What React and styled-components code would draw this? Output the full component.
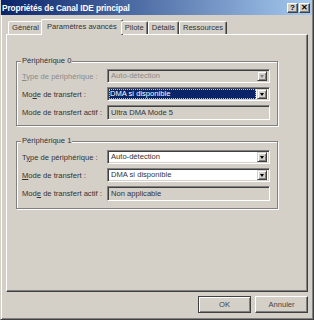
import React from "react"
import styled, { createGlobalStyle } from "styled-components"

const Global = createGlobalStyle`
body {
  margin: 0;
  background: #d4d0c8;
  font-family: "Liberation Sans", Arial, sans-serif;
}
`

const Window = styled.div`
width: 314px;
height: 320px;
box-sizing: border-box;
background: #d4d0c8;
border-left: 1px solid #d4d0c8;
border-right: 1px solid #404040;
border-bottom: 1px solid #404040;
box-shadow: inset 1px 0 0 #fff, inset -1px -1px 0 #808080;
display: flex;
flex-direction: column;
`

const TitleBar = styled.div`
height: 15px;
margin-right: 1px;
display: flex;
align-items: center;
justify-content: space-between;
background: linear-gradient(to right, #0a246a, #a6caf0);
padding: 0 2px 0 1px;
`

const Title = styled.span`
color: #fff;
font-weight: bold;
font-size: 8.3px;
letter-spacing: -0.1px;
white-space: nowrap;
`

const TitleButtons = styled.div`
display: flex;
gap: 1px;
`

const CapButton = styled.div`
width: 11px;
height: 10px;
box-sizing: border-box;
background: #d4d0c8;
border-top: 1px solid #fff;
border-left: 1px solid #fff;
border-right: 1px solid #404040;
border-bottom: 1px solid #404040;
box-shadow: inset -1px -1px 0 #808080;
display: flex;
align-items: center;
justify-content: center;
font-size: 8px;
font-weight: bold;
color: #000;
line-height: 1;
`

const Body = styled.div`
flex: 1;
display: flex;
flex-direction: column;
padding: 4px 5px 0 5px;
`

const TabRow = styled.div`
display: flex;
align-items: flex-end;
height: 15px;
padding-left: 2px;
position: relative;
z-index: 1;
`

const Tab = styled.div`
box-sizing: border-box;
height: ${p => (p.$active ? "16px" : "13px")};
margin: ${p => (p.$active ? "0 -2px -1px -2px" : "0")};
padding: ${p => (p.$active ? "1px 5px 0" : "0 3px")};
background: #d4d0c8;
border-top: 1px solid #fff;
border-left: 1px solid #fff;
border-right: 1px solid #404040;
box-shadow: inset -1px 0 0 #808080;
border-radius: 2px 2px 0 0;
font-size: 7.6px;
color: #333;
line-height: 12px;
white-space: nowrap;
`

const Panel = styled.div`
height: 258px;
box-sizing: border-box;
border-top: 1px solid #fff;
border-left: 1px solid #fff;
border-right: 1px solid #404040;
border-bottom: 1px solid #404040;
box-shadow: inset -1px -1px 0 #808080;
padding: 26px 0 0 9px;
display: flex;
flex-direction: column;
gap: 15px;
`

const Group = styled.div`
position: relative;
width: 262px;
box-sizing: border-box;
border: 1px solid #808080;
box-shadow: inset 1px 1px 0 #fff, 1px 1px 0 #fff;
padding: ${p => p.$pad};
display: flex;
flex-direction: column;
gap: 4px;
`

const GroupTitle = styled.span`
position: absolute;
left: 4px;
top: -6px;
padding: 0 1px;
background: #d4d0c8;
font-size: 7.6px;
line-height: 10px;
color: #333;
`

const Row = styled.div`
display: flex;
align-items: center;
`

const Label = styled.span`
width: 85px;
flex: none;
font-size: 7.6px;
color: ${p => (p.$disabled ? "#8a8a8a" : "#333")};
white-space: nowrap;
u {
  text-decoration: underline;
}
`

const Field = styled.div`
width: 163px;
height: ${p => p.$h || "14px"};
box-sizing: border-box;
border-top: 1px solid #808080;
border-left: 1px solid #808080;
border-right: 1px solid #fff;
border-bottom: 1px solid #fff;
box-shadow: inset 1px 1px 0 #404040, inset -1px -1px 0 #d4d0c8;
background: ${p => (p.$white ? "#fff" : "#d4d0c8")};
display: flex;
align-items: center;
padding: 2px 2px 2px 3px;
`

const FieldText = styled.span`
flex: 1;
font-size: 7.6px;
line-height: 10px;
color: ${p => (p.$disabled ? "#8a8a8a" : "#333")};
white-space: nowrap;
overflow: hidden;
`

const Selected = styled.span`
flex: 1;
align-self: stretch;
margin: -1px 1px -1px -2px;
padding-left: 1px;
background: #0a246a;
color: #fff;
font-size: 7.6px;
line-height: 10px;
outline: 1px dotted #c0c0c0;
outline-offset: -1px;
white-space: nowrap;
`

const ArrowButton = styled.div`
width: 10px;
height: 10px;
flex: none;
box-sizing: border-box;
background: #d4d0c8;
border-top: 1px solid #d4d0c8;
border-left: 1px solid #d4d0c8;
border-right: 1px solid #404040;
border-bottom: 1px solid #404040;
box-shadow: inset 1px 1px 0 #fff, inset -1px -1px 0 #808080;
display: flex;
align-items: center;
justify-content: center;
&::after {
  content: "";
  border-left: 2.5px solid transparent;
  border-right: 2.5px solid transparent;
  border-top: 3px solid ${p => (p.$disabled ? "#808080" : "#000")};
}
`

const Footer = styled.div`
display: flex;
justify-content: flex-end;
gap: 4px;
padding: 4px 0 0 0;
`

const Button = styled.div`
width: 53px;
height: 17px;
box-sizing: border-box;
background: #d4d0c8;
border-top: 1px solid ${p => (p.$default ? "#404040" : "#fff")};
border-left: 1px solid ${p => (p.$default ? "#404040" : "#fff")};
border-right: 1px solid #404040;
border-bottom: 1px solid #404040;
box-shadow: ${p => (p.$default ? "inset 1px 1px 0 #fff, inset -1px -1px 0 #808080" : "inset -1px -1px 0 #808080")};
display: flex;
align-items: center;
justify-content: center;
font-size: 7.6px;
color: #444;
`

function Combo({ value, white, disabled, selected }) {
    return (
        <Field $white={white}>
            {selected ? <Selected>{value}</Selected> : <FieldText $disabled={disabled}>{value}</FieldText>}
            <ArrowButton $disabled={disabled} />
        </Field>
    )
}

function App() {
    return (
        <Window>
            <Global />
            <TitleBar>
                <Title>Propriétés de Canal IDE principal</Title>
                <TitleButtons>
                    <CapButton>?</CapButton>
                    <CapButton>✕</CapButton>
                </TitleButtons>
            </TitleBar>
            <Body>
                <TabRow>
                    <Tab>Général</Tab>
                    <Tab $active>Paramètres avancés</Tab>
                    <Tab>Pilote</Tab>
                    <Tab>Détails</Tab>
                    <Tab>Ressources</Tab>
                </TabRow>
                <Panel>
                    <Group $pad="7px 5px 5px 5px">
                        <GroupTitle>Périphérique 0</GroupTitle>
                        <Row>
                            <Label $disabled><u>T</u>ype de périphérique :</Label>
                            <Combo value="Auto-détection" disabled />
                        </Row>
                        <Row>
                            <Label>Mo<u>d</u>e de transfert :</Label>
                            <Combo value="DMA si disponible" white selected />
                        </Row>
                        <Row>
                            <Label>Mode de transfert actif :</Label>
                            <Field $h="15px"><FieldText>Ultra DMA Mode 5</FieldText></Field>
                        </Row>
                    </Group>
                    <Group $pad="8px 5px 7px 5px">
                        <GroupTitle>Périphérique 1</GroupTitle>
                        <Row>
                            <Label>T<u>y</u>pe de périphérique :</Label>
                            <Combo value="Auto-détection" white />
                        </Row>
                        <Row>
                            <Label><u>M</u>ode de transfert :</Label>
                            <Combo value="DMA si disponible" white />
                        </Row>
                        <Row>
                            <Label>Mod<u>e</u> de transfert actif :</Label>
                            <Field $h="15px"><FieldText>Non applicable</FieldText></Field>
                        </Row>
                    </Group>
                </Panel>
                <Footer>
                    <Button $default>OK</Button>
                    <Button>Annuler</Button>
                </Footer>
            </Body>
        </Window>
    )
}

export default App
